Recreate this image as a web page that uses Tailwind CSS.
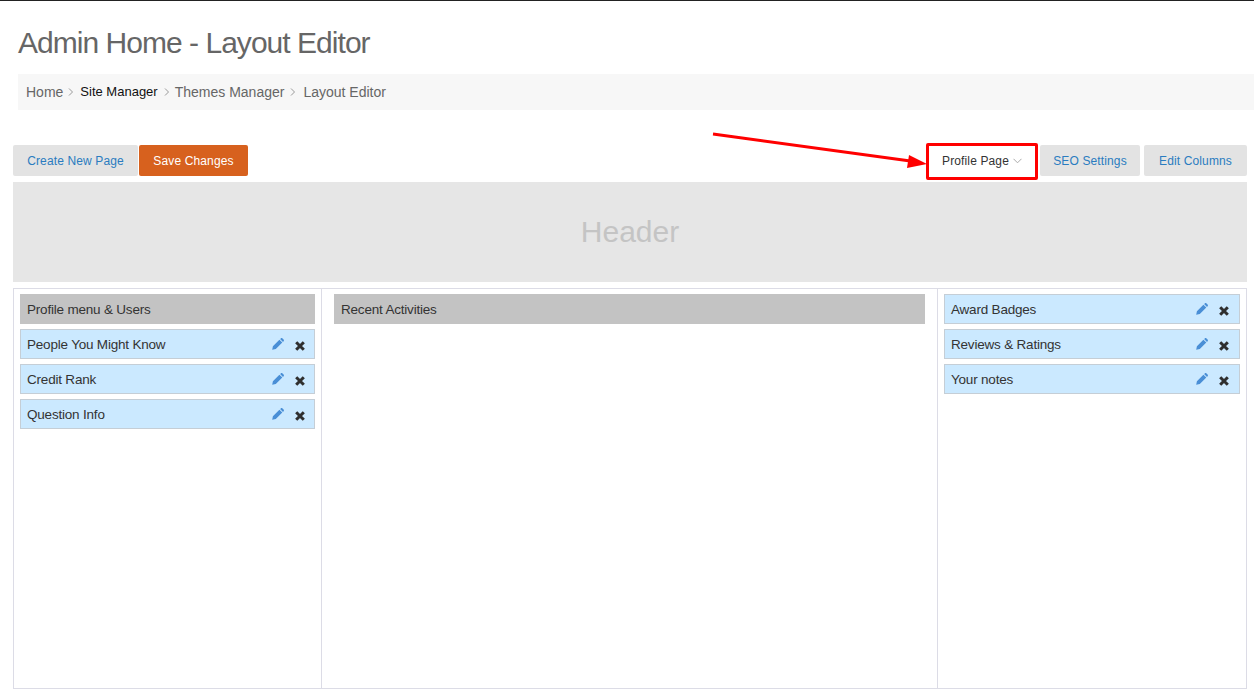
<!DOCTYPE html>
<html>
<head>
<meta charset="utf-8">
<script src="https://cdn.jsdelivr.net/npm/@tailwindcss/browser@4"></script>
</head>
<body class="bg-white font-['Liberation_Sans',Arial,sans-serif] text-[13.5px] tracking-[-0.2px] text-[#333]">
<div class="relative w-[1254px] h-[693px] overflow-hidden border-t border-t-[#222]">
  <h1 class="ml-[18px] mt-[24px] h-[36px] text-[30px] leading-[36px] font-normal text-[#666] tracking-[-0.97px]">Admin Home - Layout Editor</h1>
  <div class="ml-[18px] mt-[13px] h-[36px] bg-[#f7f7f7] flex items-center pl-[8px] text-[14px] tracking-normal text-[#666]">
    <span>Home</span>
    <svg class="w-[6px] h-[8px] ml-[5px] mr-[6px]" viewBox="0 0 6 8" fill="none" stroke="#999" stroke-width="1"><path d="M1 0.5 L4.5 4 L1 7.5"/></svg>
    <span class="text-[13px] text-[#111]">Site Manager</span>
    <svg class="w-[6px] h-[8px] ml-[6px] mr-[5px]" viewBox="0 0 6 8" fill="none" stroke="#999" stroke-width="1"><path d="M1 0.5 L4.5 4 L1 7.5"/></svg>
    <span>Themes Manager</span>
    <svg class="w-[6px] h-[8px] ml-[6px] mr-[7px]" viewBox="0 0 6 8" fill="none" stroke="#999" stroke-width="1"><path d="M1 0.5 L4.5 4 L1 7.5"/></svg>
    <span>Layout Editor</span>
  </div>
  <div class="mx-[7px] mt-[33px] h-[37px] flex items-center text-[12px] tracking-[0.13px]">
    <a class="ml-[6px] mb-[2px] h-[31px] w-[125px] flex items-center justify-center rounded-[2px] bg-[#e3e3e3] text-[#2a7cc0]">Create New Page</a>
    <a class="ml-[1px] mb-[2px] h-[31px] w-[109px] flex items-center justify-center rounded-[2px] bg-[#d7611e] text-white">Save Changes</a>
    <div class="flex-1"></div>
    <a class="h-[37px] w-[112px] pb-[1px] flex items-center justify-center gap-[4px] rounded-[2px] border-[3px] border-[#ff0000] bg-white text-[#333]">Profile Page
      <svg class="w-[9px] h-[6px]" viewBox="0 0 9 6" fill="none" stroke="#aaa" stroke-width="1"><path d="M0.5 0.8 L4.5 4.8 L8.5 0.8"/></svg>
    </a>
    <a class="ml-[2px] mb-[2px] h-[31px] w-[100px] flex items-center justify-center rounded-[2px] bg-[#e3e3e3] text-[#2a7cc0]">SEO Settings</a>
    <a class="ml-[4px] mb-[2px] h-[31px] w-[103px] flex items-center justify-center rounded-[2px] bg-[#e3e3e3] text-[#2a7cc0]">Edit Columns</a>
  </div>
  <div class="ml-[13px] mr-[7px] mt-[2px] h-[100px] pb-[2px] bg-[#e6e6e6] flex items-center justify-center text-[30px] tracking-normal text-[#c4c4c4]">Header</div>
  <div class="ml-[13px] mr-[7px] mt-[6px] h-[401px] border border-[#dcdce6] flex">
    <div class="w-[308px] border-r border-[#dcdce6] px-[6px] pt-[5px] flex flex-col gap-[5px]">
      <div class="h-[30px] flex items-center pl-[7px] bg-[#c3c3c3]"><span class="pt-[2px]">Profile menu &amp; Users</span></div>
      <div class="h-[30px] flex items-center justify-between pl-[6px] pr-[9px] bg-[#cbe9ff] border border-[#c5ced6]">
        <span class="pt-[2px]">People You Might Know</span>
        <span class="flex items-center gap-[11px]">
          <svg class="w-[12px] h-[12px] -mt-[1px]" viewBox="0 0 12 12"><path fill="#4a8fd6" d="M0.2 11.8 L0.9 8.2 L7.4 1.7 L10.3 4.6 L3.8 11.1 Z M8.1 1 L8.8 0.4 C9.3 -0.1 10 -0.1 10.5 0.4 L11.6 1.5 C12.1 2 12.1 2.7 11.6 3.2 L11 3.9 Z"/></svg>
          <svg class="w-[10px] h-[10px] mt-[3px]" viewBox="0 0 10 10"><path stroke="#2f2f2f" stroke-width="3" d="M1.2 1.2 L8.8 8.8 M8.8 1.2 L1.2 8.8"/></svg>
        </span>
      </div>
      <div class="h-[30px] flex items-center justify-between pl-[6px] pr-[9px] bg-[#cbe9ff] border border-[#c5ced6]">
        <span class="pt-[2px]">Credit Rank</span>
        <span class="flex items-center gap-[11px]">
          <svg class="w-[12px] h-[12px] -mt-[1px]" viewBox="0 0 12 12"><path fill="#4a8fd6" d="M0.2 11.8 L0.9 8.2 L7.4 1.7 L10.3 4.6 L3.8 11.1 Z M8.1 1 L8.8 0.4 C9.3 -0.1 10 -0.1 10.5 0.4 L11.6 1.5 C12.1 2 12.1 2.7 11.6 3.2 L11 3.9 Z"/></svg>
          <svg class="w-[10px] h-[10px] mt-[3px]" viewBox="0 0 10 10"><path stroke="#2f2f2f" stroke-width="3" d="M1.2 1.2 L8.8 8.8 M8.8 1.2 L1.2 8.8"/></svg>
        </span>
      </div>
      <div class="h-[30px] flex items-center justify-between pl-[6px] pr-[9px] bg-[#cbe9ff] border border-[#c5ced6]">
        <span class="pt-[2px]">Question Info</span>
        <span class="flex items-center gap-[11px]">
          <svg class="w-[12px] h-[12px] -mt-[1px]" viewBox="0 0 12 12"><path fill="#4a8fd6" d="M0.2 11.8 L0.9 8.2 L7.4 1.7 L10.3 4.6 L3.8 11.1 Z M8.1 1 L8.8 0.4 C9.3 -0.1 10 -0.1 10.5 0.4 L11.6 1.5 C12.1 2 12.1 2.7 11.6 3.2 L11 3.9 Z"/></svg>
          <svg class="w-[10px] h-[10px] mt-[3px]" viewBox="0 0 10 10"><path stroke="#2f2f2f" stroke-width="3" d="M1.2 1.2 L8.8 8.8 M8.8 1.2 L1.2 8.8"/></svg>
        </span>
      </div>
    </div>
    <div class="w-[616px] border-r border-[#dcdce6] px-[12px] pt-[5px]">
      <div class="h-[30px] flex items-center pl-[7px] bg-[#c3c3c3]"><span class="pt-[2px]">Recent Activities</span></div>
    </div>
    <div class="flex-1 px-[6px] pt-[5px] flex flex-col gap-[5px]">
      <div class="h-[30px] flex items-center justify-between pl-[6px] pr-[10px] bg-[#cbe9ff] border border-[#c5ced6]">
        <span class="pt-[2px]">Award Badges</span>
        <span class="flex items-center gap-[11px]">
          <svg class="w-[12px] h-[12px] -mt-[1px]" viewBox="0 0 12 12"><path fill="#4a8fd6" d="M0.2 11.8 L0.9 8.2 L7.4 1.7 L10.3 4.6 L3.8 11.1 Z M8.1 1 L8.8 0.4 C9.3 -0.1 10 -0.1 10.5 0.4 L11.6 1.5 C12.1 2 12.1 2.7 11.6 3.2 L11 3.9 Z"/></svg>
          <svg class="w-[10px] h-[10px] mt-[3px]" viewBox="0 0 10 10"><path stroke="#2f2f2f" stroke-width="3" d="M1.2 1.2 L8.8 8.8 M8.8 1.2 L1.2 8.8"/></svg>
        </span>
      </div>
      <div class="h-[30px] flex items-center justify-between pl-[6px] pr-[10px] bg-[#cbe9ff] border border-[#c5ced6]">
        <span class="pt-[2px]">Reviews &amp; Ratings</span>
        <span class="flex items-center gap-[11px]">
          <svg class="w-[12px] h-[12px] -mt-[1px]" viewBox="0 0 12 12"><path fill="#4a8fd6" d="M0.2 11.8 L0.9 8.2 L7.4 1.7 L10.3 4.6 L3.8 11.1 Z M8.1 1 L8.8 0.4 C9.3 -0.1 10 -0.1 10.5 0.4 L11.6 1.5 C12.1 2 12.1 2.7 11.6 3.2 L11 3.9 Z"/></svg>
          <svg class="w-[10px] h-[10px] mt-[3px]" viewBox="0 0 10 10"><path stroke="#2f2f2f" stroke-width="3" d="M1.2 1.2 L8.8 8.8 M8.8 1.2 L1.2 8.8"/></svg>
        </span>
      </div>
      <div class="h-[30px] flex items-center justify-between pl-[6px] pr-[10px] bg-[#cbe9ff] border border-[#c5ced6]">
        <span class="pt-[2px]">Your notes</span>
        <span class="flex items-center gap-[11px]">
          <svg class="w-[12px] h-[12px] -mt-[1px]" viewBox="0 0 12 12"><path fill="#4a8fd6" d="M0.2 11.8 L0.9 8.2 L7.4 1.7 L10.3 4.6 L3.8 11.1 Z M8.1 1 L8.8 0.4 C9.3 -0.1 10 -0.1 10.5 0.4 L11.6 1.5 C12.1 2 12.1 2.7 11.6 3.2 L11 3.9 Z"/></svg>
          <svg class="w-[10px] h-[10px] mt-[3px]" viewBox="0 0 10 10"><path stroke="#2f2f2f" stroke-width="3" d="M1.2 1.2 L8.8 8.8 M8.8 1.2 L1.2 8.8"/></svg>
        </span>
      </div>
    </div>
  </div>
  <svg class="absolute left-[710px] top-[130px] w-[220px] h-[40px]" viewBox="0 0 220 40" fill="#ff0000">
    <path d="M3 3 L204 30.5" stroke="#ff0000" stroke-width="3" fill="none"/>
    <path d="M199 24 L217 33 L197 37 Z"/>
  </svg>
</div>
</body>
</html>
